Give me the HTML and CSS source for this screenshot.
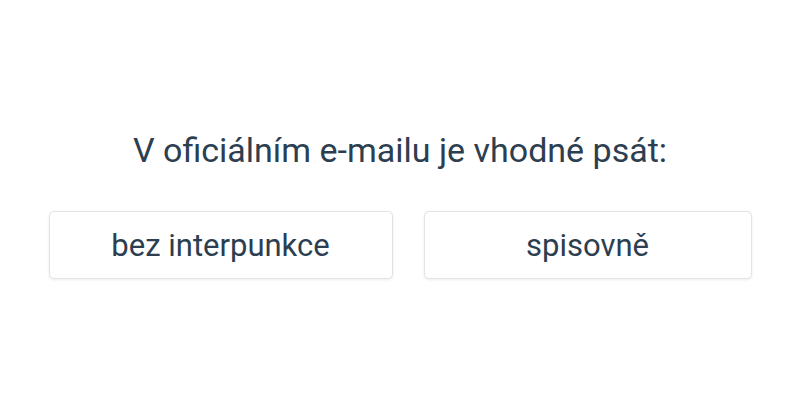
FILE: index.html
```html
<!DOCTYPE html>
<html lang="cs">
<head>
<meta charset="utf-8">
<link rel="stylesheet" href="styles.css">
</head>
<body>
<main class="quiz">
  <h1 class="question">V oficiálním e-mailu je vhodné psát:</h1>
  <div class="options">
    <button class="option">bez interpunkce</button>
    <button class="option">spisovně</button>
  </div>
</main>
</body>
</html>
```
FILE: styles.css
```css
html, body {
  margin: 0;
  padding: 0;
  background: #ffffff;
}
body {
  width: 800px;
  height: 400px;
  font-family: Roboto, "Liberation Sans", sans-serif;
  color: #2c3e50;
}
.quiz {
  display: flex;
  flex-direction: column;
  align-items: center;
  padding-top: 128px;
}
.question {
  margin: 0;
  font-size: 34px;
  font-weight: 400;
  line-height: 44px;
}
.options {
  display: grid;
  grid-template-columns: 344px 328px;
  column-gap: 31px;
  margin-top: 39px;
}
.option {
  height: 68px;
  background: #fff;
  border: 1px solid #e3e3e3;
  border-radius: 5px;
  box-shadow: 0 1px 3px rgba(0,0,0,0.08);
  font-family: inherit;
  font-size: 31px;
  color: #2c3e50;
  padding: 0;
}
```
